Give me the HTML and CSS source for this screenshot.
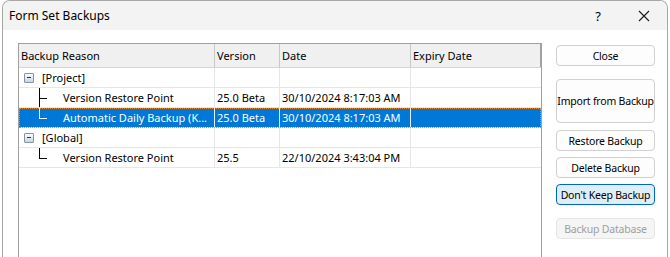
FILE: index.html
```html
<!DOCTYPE html>
<html lang="en">

<head>
  <meta charset="UTF-8">
  <meta name="viewport" content="width=device-width, initial-scale=1.0">
  <title>Form Set Backups</title>
  <link rel="stylesheet" href="styles.css">
</head>

<body>
  <div class="window">
    <div class="titlebar">
      <span class="title">Form Set Backups</span>
      <span class="help">?</span>
      <span class="close-x">
        <svg width="12" height="12" viewBox="0 0 12 12"><path d="M1 1 L11 11 M11 1 L1 11" stroke="#1a1a1a" stroke-width="1.1" fill="none" /></svg>
      </span>
    </div>

    <div class="content">
      <div class="list">
        <div class="row head">
          <div class="cell">Backup Reason</div>
          <div class="cell">Version</div>
          <div class="cell">Date</div>
          <div class="cell">Expiry Date</div>
        </div>
        <div class="row">
          <div class="cell group"><i class="expander"></i>[Project]</div>
          <div class="cell"></div>
          <div class="cell"></div>
          <div class="cell"></div>
        </div>
        <div class="row">
          <div class="cell child"><i class="branch tee"></i>Version Restore Point</div>
          <div class="cell">25.0 Beta</div>
          <div class="cell">30/10/2024 8:17:03 AM</div>
          <div class="cell"></div>
        </div>
        <div class="row selected">
          <div class="cell child"><i class="branch last"></i>Automatic Daily Backup (K...</div>
          <div class="cell">25.0 Beta</div>
          <div class="cell">30/10/2024 8:17:03 AM</div>
          <div class="cell"></div>
        </div>
        <div class="row">
          <div class="cell group"><i class="expander"></i>[Global]</div>
          <div class="cell"></div>
          <div class="cell"></div>
          <div class="cell"></div>
        </div>
        <div class="row">
          <div class="cell child"><i class="branch last"></i>Version Restore Point</div>
          <div class="cell">25.5</div>
          <div class="cell">22/10/2024 3:43:04 PM</div>
          <div class="cell"></div>
        </div>
      </div>

      <div class="buttons">
        <button class="btn">Close</button>
        <button class="btn tall">Import from Backup</button>
        <button class="btn after-tall">Restore Backup</button>
        <button class="btn">Delete Backup</button>
        <button class="btn focused">Don't Keep Backup</button>
        <button class="btn disabled spaced">Backup Database</button>
      </div>
    </div>
  </div>
</body>

</html>
```

FILE: styles.css
```css
html,
body {
  margin: 0;
  background: #fff;
  overflow: hidden;
}

body {
  font-family: "Noto Sans", "Open Sans", sans-serif;
  font-size: 11px;
  color: #000;
}

.window {
  margin-left: 2px;
  width: 664px;
  height: 256px;
  border: 1px solid #a6a6a6;
  border-bottom: none;
  border-radius: 8px 8px 0 0;
  overflow: hidden;
  background: #fff;
}

.titlebar {
  height: 29px;
  background: #f3f3f3;
  display: flex;
  align-items: center;
  padding-left: 6px;
}

.titlebar .title {
  flex: 1;
  font-size: 12px;
}

.titlebar .help {
  width: 46px;
  text-align: center;
  font-size: 13px;
}

.titlebar .close-x {
  width: 46px;
  display: flex;
  justify-content: center;
}

.content {
  display: flex;
  padding: 13px 12px 0 15px;
}

.list {
  width: 522px;
  height: 240px;
  border: 1px solid #a0a0a0;
  border-bottom: none;
  flex: none;
}

.row {
  display: grid;
  grid-template-columns: 196px 65px 131px 1fr;
  height: 19px;
  border-bottom: 1px solid #e6e6e6;
}

.cell {
  border-right: 1px solid #e6e6e6;
  padding-left: 2px;
  display: flex;
  align-items: center;
  white-space: nowrap;
  overflow: hidden;
  position: relative;
}

.cell:last-child {
  border-right: none;
}

.row.head {
  height: 23px;
  background: #f0f0f0;
  border-bottom: 1px solid #d5d5d5;
}

.row.head .cell {
  border-right-color: #c8c8c8;
}

.row.head .cell:last-child {
  border-right: 1px solid #a0a0a0;
}

.row.selected {
  background: #0078d7;
  color: #fff;
  outline: 1px dotted #e8862a;
  outline-offset: -1px;
}

.row.selected .cell {
  border-right-color: #e8f1fa;
}

.cell.group {
  padding-left: 5px;
}

.expander {
  width: 8px;
  height: 8px;
  border: 1px solid #8494a8;
  border-radius: 1px;
  background: linear-gradient(#fdfdfe, #c9d3e0);
  margin-right: 8px;
  position: relative;
}

.expander::after {
  content: "";
  position: absolute;
  left: 2px;
  top: 3px;
  width: 4px;
  height: 1px;
  background: #333;
}

.cell.child {
  padding-left: 44px;
}

.branch {
  position: absolute;
  left: 20px;
  top: 0;
  width: 7px;
  height: 10px;
  border-left: 1px solid #000;
  border-bottom: 1px solid #000;
}

.branch.tee {
  height: 19px;
  border-bottom: none;
}

.branch.tee::after {
  content: "";
  position: absolute;
  left: 0;
  top: 10px;
  width: 7px;
  height: 1px;
  background: #000;
}

.row.selected .branch {
  border-color: #fff;
}

.buttons {
  display: flex;
  flex-direction: column;
  margin-left: 14px;
  padding-top: 2px;
}

.btn {
  width: 99px;
  height: 21px;
  padding: 0;
  font-family: inherit;
  font-size: 10.5px;
  letter-spacing: -0.2px;
  white-space: nowrap;
  color: #000;
  background: #fdfdfd;
  border: 1px solid #d0d0d0;
  border-radius: 4px;
  margin-top: 6px;
}

.btn:first-child {
  margin-top: 0;
}

.btn.tall {
  height: 44px;
  margin-top: 13px;
}

.btn.after-tall {
  margin-top: 7px;
}

.btn.focused {
  background: #e0eef9;
  border-color: #0067c0;
}

.btn.disabled {
  background: #f5f5f5;
  border-color: #e5e5e5;
  color: #a0a0a0;
}

.btn.spaced {
  margin-top: 13px;
}
```
